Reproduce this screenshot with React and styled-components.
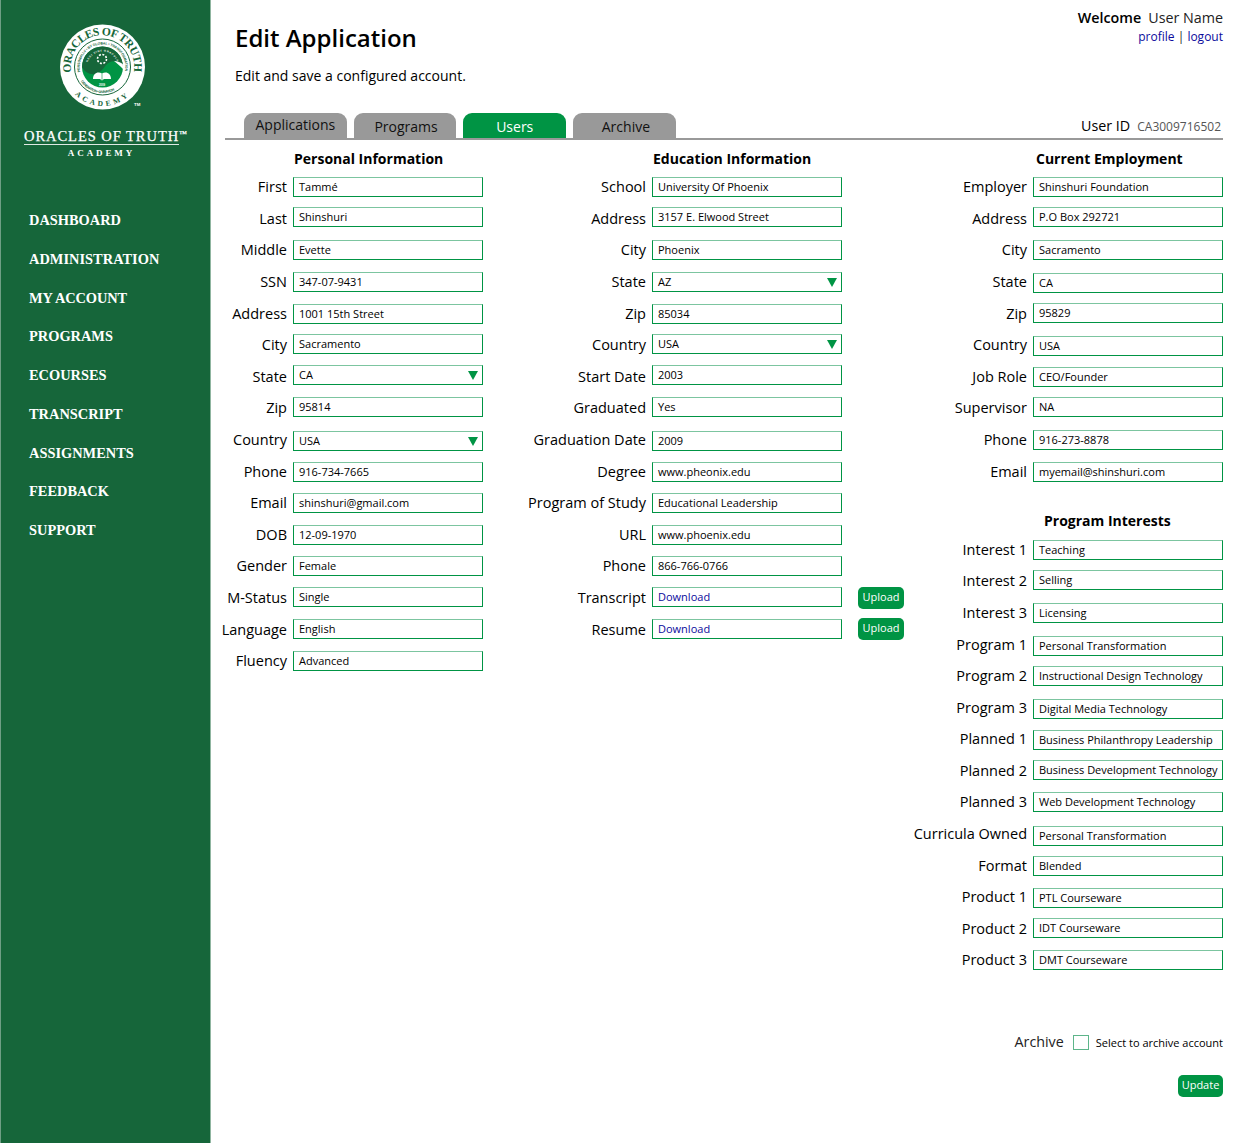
import React from 'react';
import styled, { createGlobalStyle } from 'styled-components';

const Global = createGlobalStyle`
  html, body { margin: 0; padding: 0; background: #fff; }
  body { font-family: "Open Sans", "Liberation Sans", sans-serif; color: #000; }
`;
const Page = styled.div`display: flex; width: 1259px; min-height: 1143px;`;
const Sidebar = styled.aside`
  width: 211px; flex: none; box-sizing: border-box; background: #16663a;
  border-left: 1px solid #6f9f85; border-right: 1px solid #8fb5a0;
`;
const LogoBox = styled.div`padding: 23px 0 0 56px; height: 90px;`;
const Brand = styled.div`
  margin: 16px 0 0 23px; width: 155px; height: 33px; color: #fff; text-align: center;
  font-family: "Liberation Serif", serif;
`;
const BrandName = styled.div`
  position: relative; font-size: 14.5px; line-height: 15px; letter-spacing: 0.95px; white-space: nowrap;
  border-bottom: 1px solid #dfe9e3; text-align: left; font-weight: 400;
  -webkit-text-stroke: 0.25px #fff;
  sup { font-size: 5px; position: absolute; top: 1px; line-height: 5px; letter-spacing: 0; }
`;
const BrandSub = styled.div`font-size: 9px; font-weight: 700; line-height: 11px; letter-spacing: 2.9px; margin-top: 3px;`;
const Nav = styled.nav`display: flex; flex-direction: column; margin-top: 39px; padding-left: 28px;`;
const NavItem = styled.a`
  font-family: "Liberation Serif", serif; font-weight: 700; font-size: 14.4px; height: 38.75px; line-height: 38.75px;
  color: #fff; letter-spacing: ${p => p.$sp || 0}px; white-space: nowrap;
`;
const Main = styled.main`flex: 1; min-width: 0; padding-right: 36px;`;
const Top = styled.header`display: flex; justify-content: space-between; padding-left: 24px; height: 113px;`;
const Title = styled.h1`margin: 20px 0 0; font-size: 24px; line-height: 36px; font-weight: 600; color: #000;`;
const Sub = styled.p`margin: 10px 0 0; font-size: 14px; line-height: 20px; color: #000;`;
const Account = styled.div`text-align: right; padding-top: 8px;`;
const Welcome = styled.div`
  font-size: 14.3px; line-height: 20px; color: #222;
  b { font-weight: 600; color: #000; margin-right: 7px; }
`;
const LinkLine = styled.div`
  font-size: 12px; line-height: 18px; color: #222;
  a { color: #0b0b9c; }
`;
const TabBar = styled.div`
  display: flex; align-items: flex-end; justify-content: space-between; margin-left: 14px;
  height: 25px; border-bottom: 2px solid #999; padding-left: 19px;
`;
const Tabs = styled.div`display: flex; gap: 7px;`;
const Tab = styled.div`
  width: 102.7px; height: 25px; box-sizing: border-box; border-radius: 9px 9px 0 0; text-align: center;
  font-size: 14px; line-height: ${p => p.$lh || 28}px; padding-left: ${p => p.$pl || 0}px;
  background: ${p => p.$active ? '#009444' : '#999'}; color: ${p => p.$active ? '#fff' : '#111'};
`;
const UserId = styled.div`
  font-size: 14.3px; line-height: 22px; font-weight: 500; padding-right: 2px; color: #000;
  span { font-size: 12px; font-weight: 400; color: #555; margin-left: 7px; }
`;
const Form = styled.div`display: grid; grid-template-columns: 272px 421px 319px; padding-top: 9px;`;
const Column = styled.section`display: flex; flex-direction: column;`;
const Heading = styled.h2`
  margin: ${p => p.$mt || 0}px 0 0 ${p => p.$ml}px; font-size: 14px; line-height: 20px; height: 20px; font-weight: 700; color: #000; white-space: nowrap;
`;
const Row = styled.div`
  display: grid; grid-template-columns: ${p => p.$lw}px 190px auto; grid-template-rows: 20px; column-gap: 6px; height: 20px;
  margin-top: ${p => p.$gap}px; align-items: center;
`;
const Label = styled.label`
  text-align: right; font-size: 14.5px; line-height: 20px; color: #000; white-space: nowrap;
  transform: translateY(${p => p.$nudge}px); justify-self: end;
`;
const Field = styled.div`
  position: relative; box-sizing: border-box; height: 20px; line-height: 18px; padding-left: 5px;
  border: 1px solid #009444; border-top-color: #7cc5a0; font-size: 11px; color: #000; white-space: nowrap;
  a { color: #0b0b9c; }
`;
const Arrow = styled.i`
  position: absolute; right: 4px; top: 5px; width: 0; height: 0;
  border-left: 5px solid transparent; border-right: 5px solid transparent; border-top: 9px solid #009444;
`;
const Button = styled.button`
  appearance: none; border: 0; background: #009444; color: #fff; border-radius: 5px;
  width: ${p => p.$w}px; height: 22px; padding: 0 0 2px; font: 400 11px/20px "Open Sans", sans-serif;
`;
const UploadBtn = styled(Button)`margin: ${p => p.$up ? -1 : 0}px 0 0 10px; justify-self: start; align-self: start;`;
const ArchiveRow = styled.div`
  display: flex; align-items: center; justify-content: flex-end; margin-top: 62px; height: 20px;
`;
const ArchiveLabel = styled.span`font-size: 14.3px; line-height: 20px; color: #222;`;
const Check = styled.span`
  width: 16px; height: 15px; box-sizing: border-box; border: 1px solid #5db58a; margin: 0 7px 0 9px;
`;
const ArchiveHint = styled.span`font-size: 11px; color: #000;`;
const UpdateBox = styled.div`display: flex; justify-content: flex-end; margin-top: 23px;`;

const personal = [
  ['First', 'Tammé', 187, 187], ['Last', 'Shinshuri', 217, 219], ['Middle', 'Evette', 250, 250],
  ['SSN', '347-07-9431', 282, 282], ['Address', '1001 15th Street', 314, 314], ['City', 'Sacramento', 344, 345],
  ['State', 'CA', 375, 377, 'select'], ['Zip', '95814', 407, 408], ['Country', 'USA', 441, 440, 'select'],
  ['Phone', '916-734-7665', 472, 472], ['Email', 'shinshuri@gmail.com', 503, 503], ['DOB', '12-09-1970', 535, 535],
  ['Gender', 'Female', 566, 566], ['M-Status', 'Single', 597, 598], ['Language', 'English', 629, 630], ['Fluency', 'Advanced', 661, 661],
];
const education = [
  ['School', 'University Of Phoenix', 187, 187], ['Address', '3157 E. Elwood Street', 217, 219], ['City', 'Phoenix', 250, 250],
  ['State', 'AZ', 282, 282, 'select'], ['Zip', '85034', 314, 314], ['Country', 'USA', 344, 345, 'select'],
  ['Start Date', '2003', 375, 377], ['Graduated', 'Yes', 407, 408], ['Graduation Date', '2009', 441, 440],
  ['Degree', 'www.pheonix.edu', 472, 472], ['Program of Study', 'Educational Leadership', 503, 503], ['URL', 'www.phoenix.edu', 535, 535],
  ['Phone', '866-766-0766', 566, 566], ['Transcript', 'Download', 597, 598, 'file'], ['Resume', 'Download', 629, 630, 'file', true],
];
const employment = [
  ['Employer', 'Shinshuri Foundation', 187, 187], ['Address', 'P.O Box 292721', 217, 219], ['City', 'Sacramento', 250, 250],
  ['State', 'CA', 283, 282], ['Zip', '95829', 313, 314], ['Country', 'USA', 346, 345], ['Job Role', 'CEO/Founder', 377, 377],
  ['Supervisor', 'NA', 407, 408], ['Phone', '916-273-8878', 440, 440], ['Email', 'myemail@shinshuri.com', 472, 472],
];
const interests = [
  ['Interest 1', 'Teaching', 550, 550], ['Interest 2', 'Selling', 580, 581], ['Interest 3', 'Licensing', 613, 613],
  ['Program 1', 'Personal Transformation', 646, 645], ['Program 2', 'Instructional Design Technology', 676, 676],
  ['Program 3', 'Digital Media Technology', 709, 708], ['Planned 1', 'Business Philanthropy Leadership', 740, 739],
  ['Planned 2', 'Business Development Technology', 770, 771], ['Planned 3', 'Web Development Technology', 802, 802],
  ['Curricula Owned', 'Personal Transformation', 836, 834], ['Format', 'Blended', 866, 866], ['Product 1', 'PTL Courseware', 898, 897],
  ['Product 2', 'IDT Courseware', 928, 929], ['Product 3', 'DMT Courseware', 960, 960],
];

function Rows({ rows, lw, start }) {
  return rows.map(([label, value, y, ly, kind, up], i) => {
    const prev = i === 0 ? start : rows[i - 1][2] + 10;
    return (
      <Row key={label + i} $lw={lw} $gap={y - 10 - prev}>
        <Label $nudge={ly - y}>{label}</Label>
        <Field>
          {kind === 'file' ? <a>{value}</a> : value}
          {kind === 'select' && <Arrow />}
        </Field>
        {kind === 'file' && <UploadBtn $w={46} $up={up}>Upload</UploadBtn>}
      </Row>
    );
  });
}

function Logo() {
  return (
    <svg width="92" height="90" viewBox="0 0 92 90" style={{ display: 'block' }}>
      <defs>
        <path id="arcTop" d="M14.3 49.5 A31.7 31.7 0 1 1 76.7 49.5" />
        <path id="arcBottom" d="M17.9 71.6 A39 39 0 0 0 73.1 71.6" />
        <path id="arcInnerTop" d="M23.2 49 A22.8 22.8 0 1 1 67.8 49" />
        <path id="arcInnerBottom" d="M20.6 51 A25.8 25.8 0 0 0 70.4 51" />
        <path id="arcCore" d="M30 44 A15.5 15.5 0 0 1 61 44" />
      </defs>
      <circle cx="45.5" cy="44" r="42.5" fill="#fff" />
      <circle cx="45.5" cy="44" r="28" fill="#fff" stroke="#16663a" strokeWidth="1" />
      <text fill="#16663a" fontFamily="Liberation Serif" fontWeight="700" fontSize="11.5">
        <textPath href="#arcTop" textLength="110" lengthAdjust="spacing">ORACLES OF TRUTH</textPath>
      </text>
      <text fill="#16663a" fontFamily="Liberation Serif" fontWeight="700" fontSize="7.5">
        <textPath href="#arcBottom" textLength="58" lengthAdjust="spacing">ACADEMY</textPath>
      </text>
      <text fill="#16663a" fontFamily="Liberation Sans" fontWeight="700" fontSize="3.5">
        <textPath href="#arcInnerTop" textLength="80" lengthAdjust="spacing">PERSONALLY • BY GLOBAL • TRANSFORMATION</textPath>
      </text>
      <text fill="#16663a" fontFamily="Liberation Sans" fontWeight="700" fontSize="3.5">
        <textPath href="#arcInnerBottom" startOffset="12%" textLength="38" lengthAdjust="spacing">GENERATION • DIVINATION</textPath>
      </text>
      <circle cx="45.5" cy="44" r="20.5" fill="#009444" />
      <path d="M25 44 A20.5 20.5 0 0 1 66 44 C63 40 58 37 53 39 C48 41 47 47 41 50 C35 53 28 50 25 44 Z" fill="#16663a" />
      <path d="M65.8 41 A20.5 20.5 0 0 1 66 46 C63 43 60 40 57 38 C60 38 63 39 65.8 41 Z" fill="#fff" />
      <text fill="#fff" fontFamily="Liberation Sans" fontWeight="700" fontSize="2.6">
        <textPath href="#arcCore" startOffset="10%" textLength="38" lengthAdjust="spacing">REGI VINT ORACULA</textPath>
      </text>
      <circle cx="45" cy="36" r="4.5" fill="none" stroke="#fff" strokeWidth="1.6" strokeDasharray="2 1.5" />
      <path d="M36 56 C36 50 41 48 45 50.5 C49 48 54 50 54 56 L47 56 L45 57.5 L43 56 Z" fill="#fff" />
      <path d="M45 50.5 L45 57" stroke="#009444" strokeWidth="0.6" />
      <text x="45" y="62.5" textAnchor="middle" fill="#fff" fontFamily="Liberation Sans" fontWeight="700" fontSize="2.8">2009</text>
      <text x="77" y="83" fill="#fff" fontFamily="Liberation Sans" fontWeight="700" fontSize="4.4">TM</text>
    </svg>
  );
}

const navItems = [
  ['DASHBOARD', 0], ['ADMINISTRATION', 0.02], ['MY ACCOUNT', -0.1], ['PROGRAMS', 0], ['ECOURSES', 0],
  ['TRANSCRIPT', 0], ['ASSIGNMENTS', 0], ['FEEDBACK', 0], ['SUPPORT', 0],
];

export default function App() {
  return (
    <Page>
      <Global />
      <Sidebar>
        <LogoBox><Logo /></LogoBox>
        <Brand>
          <BrandName>ORACLES OF TRUTH<sup>TM</sup></BrandName>
          <BrandSub>ACADEMY</BrandSub>
        </Brand>
        <Nav>{navItems.map(([n, s]) => <NavItem key={n} $sp={s}>{n}</NavItem>)}</Nav>
      </Sidebar>
      <Main>
        <Top>
          <div>
            <Title>Edit Application</Title>
            <Sub>Edit and save a configured account.</Sub>
          </div>
          <Account>
            <Welcome><b>Welcome</b>User Name</Welcome>
            <LinkLine><a>profile</a> | <a>logout</a></LinkLine>
          </Account>
        </Top>
        <TabBar>
          <Tabs>
            <Tab $lh={24}>Applications</Tab>
            <Tab $pl={2}>Programs</Tab>
            <Tab $active>Users</Tab>
            <Tab $pl={3}>Archive</Tab>
          </Tabs>
          <UserId>User ID<span>CA3009716502</span></UserId>
        </TabBar>
        <Form>
          <Column>
            <Heading $ml={83}>Personal Information</Heading>
            <Rows rows={personal} lw={76} start={169} />
          </Column>
          <Column>
            <Heading $ml={170}>Education Information</Heading>
            <Rows rows={education} lw={163} start={169} />
          </Column>
          <Column>
            <Heading $ml={132}>Current Employment</Heading>
            <Rows rows={employment} lw={123} start={169} />
            <Heading $ml={140} $mt={29}>Program Interests</Heading>
            <Rows rows={interests} lw={123} start={531} />
            <ArchiveRow>
              <ArchiveLabel>Archive</ArchiveLabel>
              <Check />
              <ArchiveHint>Select to archive account</ArchiveHint>
            </ArchiveRow>
            <UpdateBox><Button $w={45}>Update</Button></UpdateBox>
          </Column>
        </Form>
      </Main>
    </Page>
  );
}
